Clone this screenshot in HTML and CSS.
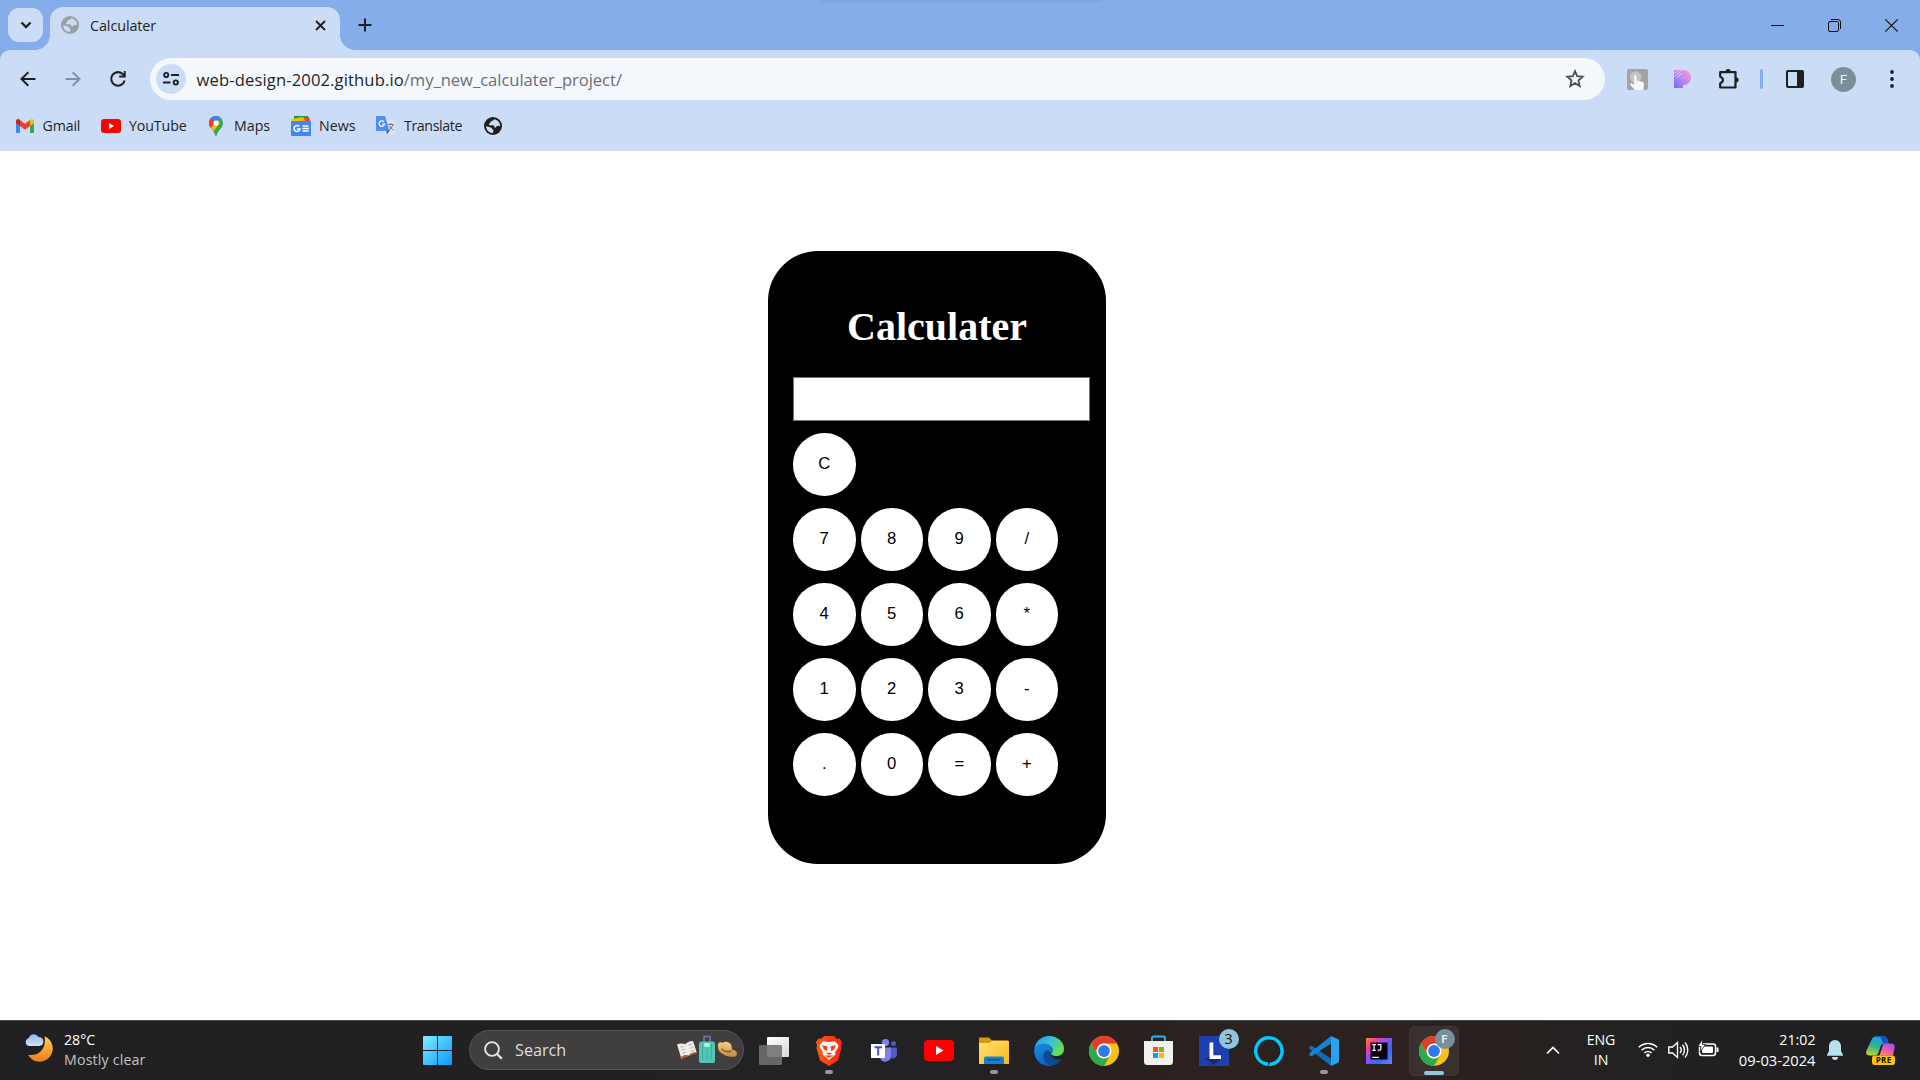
FILE: index.html
```html
<!DOCTYPE html>
<html lang="en">
<head>
<meta charset="utf-8">
<title>Calculater</title>
<link rel="stylesheet" href="styles.css">
</head>
<body>
<div class="browser">
  <header class="tabstrip">
    <button class="tab-search" aria-label="Search tabs"><svg width="12" height="8" viewBox="0 0 12 8"><path d="M1.500 1.500 6 6l4.500-4.500" fill="none" stroke="#1f1f1f" stroke-width="2.300"/></svg></button>
    <div class="tab">
      <svg width="18" height="18" viewBox="0 0 18 18"><circle cx="9" cy="9" r="9" fill="#9a9ea3"/><path d="M10.500 2.200c-1 .5-1.300 1.600-2.800 1.900-1.300.3-1.200 1.900-2.200 2.400C4.800 7 4.700 8 5.500 8.300h3.300c1.500 0 1.700 1.300 1.600 2.300 1.800.3 1.800-1.600 3.400-1.900 1-.1 1.700.3 2.200.6A7 7 0 0 0 10.500 2.200zM2 9.500c.4 3.700 3.300 6.500 6.700 6.500 1 0 .1-1.400.6-2 .8-.8-.3-1.300-1-2-.9-.9-1-1.500-2.300-1.700-1.300-.2-2.300-.8-4-.8z" fill="#cbdcf6"/></svg>
      <span class="tab-title">Calculater</span>
      <svg class="tab-close" width="11" height="11" viewBox="0 0 11 11"><path d="M1 1l9 9M10 1l-9 9" stroke="#1f1f1f" stroke-width="1.900"/></svg>
    </div>
    <svg class="new-tab" width="14" height="14" viewBox="0 0 14 14"><path d="M7 .5v13M.5 7h13" stroke="#1f1f1f" stroke-width="2"/></svg>
    <div class="window-controls">
      <svg width="13" height="13" viewBox="0 0 13 13"><path d="M0 6.500h13" stroke="#111"/></svg>
      <svg width="13" height="13" viewBox="0 0 13 13" fill="none" stroke="#111"><rect x=".5" y="2.500" width="10" height="10" rx="1.500"/><path d="M3 .5h7a2.500 2.500 0 0 1 2.500 2.500v7"/></svg>
      <svg width="13" height="13" viewBox="0 0 13 13"><path d="M.3.300l12.400 12.400M12.700.3.300 12.700" stroke="#111" stroke-width="1.200"/></svg>
    </div>
  </header>

  <div class="chrome">
    <nav class="toolbar">
      <svg class="nav-icon" width="16" height="16" viewBox="0 0 16 16"><path d="M15.500 8H2M8.300 1.200 1.500 8l6.800 6.800" fill="none" stroke="#1f1f1f" stroke-width="2"/></svg>
      <svg class="nav-icon" width="16" height="16" viewBox="0 0 16 16"><path d="M.5 8H14M7.700 1.200 14.500 8l-6.800 6.800" fill="none" stroke="#8590a2" stroke-width="2"/></svg>
      <svg class="reload" width="16" height="16" viewBox="0 0 16 16"><path d="M14.600 9.500A6.800 6.800 0 1 1 13 3.300l1.500 1.600" fill="none" stroke="#1f1f1f" stroke-width="2.100"/><path d="M15.700 0v6.500H9.200V4.600h4.600V0z" fill="#1f1f1f"/></svg>
      <div class="omnibox">
        <span class="site-info"><svg width="16" height="14" viewBox="0 0 16 14" fill="none" stroke="#1f1f1f" stroke-width="1.900"><circle cx="3.200" cy="3" r="2.100"/><path d="M8 3h8M0 10.500h7.500"/><circle cx="12.800" cy="10.500" r="2.100"/></svg></span>
        <span class="url"><span class="host">web-design-2002.github.io</span><span class="path">/my_new_calculater_project/</span></span>
        <svg class="star" width="20" height="20" viewBox="0 0 20 20"><path d="M10 2.200l2.100 5 5.600.5-4.200 3.700 1.200 5.600L10 14l-4.700 3 1.200-5.600L2.300 7.700l5.600-.5z" fill="none" stroke="#4b4e52" stroke-width="1.800"/></svg>
      </div>
      <svg class="ext-touch" width="21" height="21" viewBox="0 0 21 21"><rect width="21" height="21" rx="2" fill="#a3a3a3"/><circle cx="8.500" cy="8" r="5.800" fill="#c3c3c3"/><path d="M7 7.500c0-2 2.600-2 2.600 0v4l5.800 1.300c1.400.4 1.700 1.200 1.600 2.500l-.6 5.700H7.600L3 15.300c.2-1.700 2.300-1.500 4 .4z" fill="#f4f8fd"/></svg>
      <svg class="ext-p" width="18" height="18" viewBox="0 0 18 18"><defs><linearGradient id="pp" x1="0" y1="1" x2="1" y2="0"><stop offset="0" stop-color="#6a6bff"/><stop offset=".55" stop-color="#c88bea"/><stop offset="1" stop-color="#ff9fc0"/></linearGradient></defs><path d="M0 0h9.500C14 0 17 3.500 17 7.500S14 15 9 15v3H0z" fill="url(#pp)"/><path d="M0 4 4 0M0 7.500 7.500 0M3 8 8 3" stroke="#dce4f8" stroke-width=".8"/></svg>
      <svg class="ext-puzzle" width="22" height="22" viewBox="0 0 22 22"><path d="M2.200 4.200h15.300v15.300H2.200v-4.300c3.600-1.200 3.600-5.200 0-6.400z" fill="none" stroke="#1f1f1f" stroke-width="2.200" stroke-linejoin="round"/><path d="M7.500 3.500a2.600 2.600 0 0 1 5.200 0zM18 9.200a2.600 2.600 0 0 1 0 5.200z" fill="#1f1f1f"/></svg>
      <i class="divider"></i>
      <svg class="side-panel" width="18" height="18" viewBox="0 0 18 18"><rect x="1" y="1" width="16" height="16" rx="1" fill="none" stroke="#1f1f1f" stroke-width="2"/><path d="M11 1h6v16h-6z" fill="#1f1f1f"/></svg>
      <span class="avatar">F</span>
      <svg class="menu" width="4" height="18" viewBox="0 0 4 18" fill="#1f1f1f"><circle cx="2" cy="2" r="1.900"/><circle cx="2" cy="9" r="1.900"/><circle cx="2" cy="16" r="1.900"/></svg>
    </nav>
    <nav class="bookmarks">
      <a class="bm bm-gmail"><svg width="18" height="14" viewBox="0 0 18 14"><path d="M0 2v10.700c0 .7.500 1.300 1.200 1.300H4V5z" fill="#4285f4"/><path d="M18 2v10.700c0 .7-.5 1.300-1.200 1.300H14V5z" fill="#34a853"/><path d="M14 1.200V7l4-3V2.200C18 .2 15.800-.7 14.300.6z" fill="#fbbc04"/><path d="M4 7V1l5 3.800L14 1v6l-5 3.800z" fill="#ea4335"/><path d="M0 2.200V4l4 3V1L3.700.6C2.200-.7 0 .2 0 2.200z" fill="#c5221f"/></svg><span>Gmail</span></a>
      <a class="bm bm-youtube"><svg width="20" height="14" viewBox="0 0 20 14"><rect width="20" height="14" rx="3" fill="#f00"/><path d="M8 4v6l5-3z" fill="#fff"/></svg><span>YouTube</span></a>
      <a class="bm bm-maps"><svg width="14" height="20" viewBox="0 0 14 20"><defs><clipPath id="pin"><path d="M7 0a7 7 0 0 0-7 7c0 5 4.500 6 6.200 12.200.2 1 1.400 1 1.600 0C9.500 13 14 12 14 7a7 7 0 0 0-7-7z"/></clipPath></defs><g clip-path="url(#pin)"><path d="M0 0h14v20H0z" fill="#34a853"/><path d="M0 13 12 0H0z" fill="#1a73e8"/><path d="M0 0 7 7l-5 5-2-2z" fill="#ea4335"/><path d="M4 0h10L7 7 3 3z" fill="#4285f4"/><path d="M1 13 9 4l2 3-7 9z" fill="#fbbc04"/></g><circle cx="7" cy="7" r="2.600" fill="#fff"/></svg><span>Maps</span></a>
      <a class="bm bm-news"><svg width="20" height="20" viewBox="0 0 20 20"><path d="M3 0h14v6H3z" fill="#0c9d58"/><path d="M8 2.500 18 1l1.500 5H8z" fill="#ea4335"/><path d="M.5 3 12 1l3 5H.5z" fill="#fbbc04"/><rect y="5" width="20" height="15" rx="1" fill="#4285f4"/><path d="M8.300 10.500A3 3 0 1 0 9 13H6M11.500 10h6M11.500 12.500h6.500M11.500 15h6" fill="none" stroke="#fff" stroke-width="1.500"/></svg><span>News</span></a>
      <a class="bm bm-translate"><svg width="19" height="19" viewBox="0 0 19 19"><rect x="8" y="4.500" width="11" height="14" rx="1" fill="#dfe2e6"/><path d="M11 18.500 10 14h4z" fill="#3a55b5"/><path d="M1 0h8l4.500 15H1a1 1 0 0 1-1-1V1a1 1 0 0 1 1-1z" fill="#4f8df5"/><path d="M8 6a2.700 2.700 0 1 0 .5 2H6" fill="none" stroke="#fff" stroke-width="1.200"/><path d="M12 8.500h6M15 7v1.500M17 8.500c-1 3-2.500 4.500-4 5.500M13.500 10c1 2 2 3 4 4" fill="none" stroke="#66758a"/></svg><span>Translate</span></a>
      <a class="bm bm-globe"><svg width="18" height="18" viewBox="0 0 18 18"><circle cx="9" cy="9" r="9" fill="#1f1f1f"/><path d="M10.500 2.200c-1 .5-1.300 1.600-2.800 1.900-1.300.3-1.200 1.900-2.200 2.400C4.800 7 4.700 8 5.500 8.300h3.300c1.500 0 1.700 1.300 1.600 2.300 1.800.3 1.800-1.600 3.400-1.900 1-.1 1.700.3 2.200.6A7 7 0 0 0 10.500 2.200zM2 9.500c.4 3.700 3.300 6.500 6.700 6.500 1 0 .1-1.400.6-2 .8-.8-.3-1.300-1-2-.9-.9-1-1.500-2.300-1.700-1.300-.2-2.300-.8-4-.8z" fill="#cbdcf6"/></svg></a>
    </nav>
  </div>

  <main class="page">
    <section class="calculator">
      <h1>Calculater</h1>
      <input class="display" type="text" aria-label="Display">
      <div class="keys">
        <button class="key clear">C</button>
        <button class="key">7</button><button class="key">8</button><button class="key">9</button><button class="key">/</button>
        <button class="key">4</button><button class="key">5</button><button class="key">6</button><button class="key">*</button>
        <button class="key">1</button><button class="key">2</button><button class="key">3</button><button class="key">-</button>
        <button class="key">.</button><button class="key">0</button><button class="key">=</button><button class="key">+</button>
      </div>
    </section>
  </main>
</div>

<footer class="taskbar">
  <div class="weather">
    <svg width="29" height="29" viewBox="0 0 29 29"><defs><linearGradient id="moon" x1="0" y1="0" x2="0" y2="1"><stop offset="0" stop-color="#ffd04a"/><stop offset="1" stop-color="#f07c1c"/></linearGradient><linearGradient id="cloud" x1="0" y1="0" x2="0" y2="1"><stop offset="0" stop-color="#8db4ee"/><stop offset="1" stop-color="#d5e3fb"/></linearGradient></defs><path d="M19.500 2.200A13.200 13.200 0 1 1 3 20.800c5 .8 9.500-.3 12.500-3.300 4-4 5.200-9.500 4-15.300z" fill="url(#moon)"/><path d="M4 12a4 4 0 0 1-.3-7.800A5.300 5.300 0 0 1 13.500 3a4.500 4.500 0 0 1 .8 9z" fill="url(#cloud)"/></svg>
    <div class="lines"><span class="bright">28°C</span><span class="cond">Mostly clear</span></div>
  </div>
  <svg width="29" height="29" viewBox="0 0 29 29"><defs><linearGradient id="win" x1="0" y1="0" x2="1" y2="1"><stop offset="0" stop-color="#7ff0ff"/><stop offset="1" stop-color="#0a96ff"/></linearGradient></defs><path d="M0 1a1 1 0 0 1 1-1h13v14H0zM15 0h13a1 1 0 0 1 1 1v13H15zM0 15h14v14H1a1 1 0 0 1-1-1zM15 15h14v13a1 1 0 0 1-1 1H15z" fill="url(#win)"/></svg>
  <div class="search">
    <svg width="19" height="19" viewBox="0 0 19 19"><circle cx="8" cy="8" r="6.900" fill="none" stroke="#e6e6e6" stroke-width="1.900"/><path d="M12.800 12.800l5 5" stroke="#e6e6e6" stroke-width="2.300"/></svg>
    <span class="search-label">Search</span>
    <svg class="search-art" width="61" height="30" viewBox="0 0 61 30"><defs><linearGradient id="hat" x1="0" y1="0" x2="0" y2="1"><stop offset="0" stop-color="#f4cf86"/><stop offset="1" stop-color="#c58a3c"/></linearGradient></defs><path d="M1 10l7-1.500 8-2.500 4 12-8 3-8 3.500z" fill="#a9643c"/><path d="M0 9.500c3-1.500 6-1.300 8.500 0l3 11c-2.500-1-5-.5-7.500 1.500zM8.500 9.500C10 7 12.500 6 16 6l3.500 11c-3.500 0-6 1-8 3.500z" fill="#efeee9"/><path d="M3 12l4-.5M4 15l4-.5M5 18l4-.5M11.500 10.500l4-1.500M12.500 13.500l4-1.500M13.500 16.500l4-1.500" stroke="#aaa" stroke-width=".8"/><path d="M27 7V1.500h6V7" fill="none" stroke="#6a78a8" stroke-width="1.600"/><rect x="22" y="6.500" width="16" height="21.500" rx="2" fill="#53c5b5"/><path d="M25.500 9v16M30 13v12M34.500 9v16" stroke="#3fae9f" stroke-width="1"/><rect x="27" y="8" width="6" height="4" rx="1" fill="#a6efe4"/><path d="M41 12c-1-4 2-6 5-4 1-2 7-2 8.500 2.500l.8 4.500c3 0 5.500 2 4.500 5-2 4-14 1-17.500-4-1-1.500-1.500-2.700-1.300-4z" fill="url(#hat)"/><path d="M44.500 13.500c2 3 6.500 4 10 2.300" fill="none" stroke="#7d5226" stroke-width="1.300"/></svg>
  </div>
  <div class="apps">
    <div class="app"><svg width="30" height="28" viewBox="0 0 30 28"><defs><linearGradient id="tv" x1="0" y1="0" x2="1" y2="1"><stop offset="0" stop-color="#fff"/><stop offset="1" stop-color="#d8d8d8"/></linearGradient></defs><rect x="8" width="22" height="20" rx="1" fill="url(#tv)"/><rect y="8" width="23" height="20" rx="1" fill="#6f6f6f" opacity=".88"/></svg></div>
    <div class="app running"><svg width="26" height="30" viewBox="0 0 26 30"><defs><linearGradient id="brave"><stop offset="0" stop-color="#ff5a14"/><stop offset="1" stop-color="#f92a12"/></linearGradient></defs><path d="M8 0h10l2.500 2.800 3-.3L26 6l-1 3.500.5 2.500-3.500 12.500L13 30l-9-5.500L.5 12 1 9.500 0 6l2.500-3.500 3 .3z" fill="url(#brave)"/><path d="M3.500 9.500 7 5.300l4 .7h4l4-.7 3.500 4.200-.7 2.500-2.800 4.200.5 2.300-4.500 3.500-2 2.300-2-2.300-4.500-3.500.5-2.300L4.200 12z" fill="#fff"/><path d="M6.500 9.500l4.700 1-.7 4.500-2.700-2.300zM19.500 9.500l-4.700 1 .7 4.500 2.700-2.300zM10.500 17h5L13 19zM8.800 19.500l4.200 2 4.200-2" fill="#fb3c12" stroke="#fb3c12" stroke-width=".5"/></svg></div>
    <div class="app"><svg width="26" height="23" viewBox="0 0 26 23"><circle cx="22.500" cy="4.600" r="2.500" fill="#5059c9"/><path d="M18 8.500h8V15a4.200 4.200 0 0 1-8 2z" fill="#5059c9"/><circle cx="14.500" cy="3.600" r="3.700" fill="#7b83eb"/><path d="M9 8.500h11V17a5.700 5.700 0 0 1-11 2z" fill="#7b83eb"/><path d="M0 5h14v14H0z" fill="#fff"/><path d="M3.500 8.300h7.500M7.200 8.300v8.200" stroke="#4b53bc" stroke-width="2"/></svg></div>
    <div class="app"><svg width="30" height="21" viewBox="0 0 30 21"><rect width="30" height="21" rx="4" fill="#f00"/><path d="M12 6v9l7.500-4.500z" fill="#fff"/></svg></div>
    <div class="app running"><svg width="30" height="28" viewBox="0 0 30 28"><defs><linearGradient id="fold" x1="0" y1="0" x2="1" y2="1"><stop offset="0" stop-color="#ffe07a"/><stop offset="1" stop-color="#fdb913"/></linearGradient></defs><path d="M0 1.500A1 1 0 0 1 1 .5h9l3 3h15a1.500 1.500 0 0 1 1.500 1.500v5H0z" fill="#d9990a"/><path d="M0 6h10.500L13 3.800h16a1 1 0 0 1 1 1V27H0z" fill="url(#fold)"/><path d="M5 27v-5.500a2 2 0 0 1 2-2h16a2 2 0 0 1 2 2V27z" fill="#1480d0"/><path d="M8.500 22.800h13" stroke="#0b4c86" stroke-width="1.200"/></svg></div>
    <div class="app"><svg width="30" height="30" viewBox="0 0 30 30"><defs><linearGradient id="e1" x1="0" y1="0" x2="1" y2=".6"><stop offset="0" stop-color="#1b9de2"/><stop offset=".5" stop-color="#35c1d8"/><stop offset="1" stop-color="#6be04a"/></linearGradient><linearGradient id="e2" x1="0" y1="0" x2=".6" y2="1"><stop offset="0" stop-color="#1a8fdb"/><stop offset="1" stop-color="#0a63c0"/></linearGradient></defs><circle cx="15" cy="15" r="15" fill="#0d4a94"/><path d="M1 10.500C8 5 19 8 19.500 14c0 2.500-2.500 2.500-2.300 4.500 0-4-5-6-7.200-1.500C8 22 11 29 18 29.700A15 15 0 0 1 1 10.500z" fill="url(#e2)"/><path d="M.7 11.500C2 5 8 0 15 0c8.500 0 15 6 15 12.500 0 5-3.500 7.500-7.500 7.500-3.500 0-6-1.300-5-2.500 3-3 1.500-8.500-5.500-9.500C7 7.300 3 8.500.7 11.500z" fill="url(#e1)"/><path d="M17.300 18c.5 2 4 2.700 7 2.200 2-.3 4-1.600 5.700-3.700v5l-2 1c-4 2.500-11 .5-10.700-4.500z" fill="#202022"/></svg></div>
    <div class="app"><svg width="30" height="30" viewBox="0 0 30 30"><circle cx="15" cy="15" r="15" fill="#fbc116"/><path d="M2 7.500A15 15 0 0 1 28 7.500H15a7.500 7.500 0 0 0-6.500 11.200z" fill="#e33b2e"/><path d="M2 7.500A15 15 0 0 0 15 30l6.500-11.300a7.500 7.500 0 0 1-13 0z" fill="#2da94f"/><circle cx="15" cy="15" r="7.500" fill="#fff"/><circle cx="15" cy="15" r="5.900" fill="#3079ea"/></svg></div>
    <div class="app"><svg class="store" width="29" height="29" viewBox="0 0 29 29"><path d="M8 5V2a1.500 1.500 0 0 1 1.500-1.500h10A1.500 1.500 0 0 1 21 2v3" fill="none" stroke="#2bb4ea" stroke-width="1.900"/><path d="M0 5h29v20.500a3.500 3.500 0 0 1-3.500 3.500h-22A3.500 3.500 0 0 1 0 25.500z" fill="#f1f1f1"/><path d="M9 11h5v5H9z" fill="#f25022"/><path d="M15 11h5v5h-5z" fill="#7fba00"/><path d="M9 17h5v5H9z" fill="#00a4ef"/><path d="M15 17h5v5h-5z" fill="#ffb900"/></svg></div>
    <div class="app"><svg width="30" height="30" viewBox="0 0 30 30"><path d="M0 0h30v30H0z" fill="#1e3fae"/><path d="M7 23 12 19l10 1v3l-7 6z" fill="#152b6b"/><path d="M10.500 6.500h3.800v12.700H22V23H10.500z" fill="#fff"/></svg><span class="count">3</span></div>
    <div class="app"><svg width="30" height="30" viewBox="0 0 30 30"><path d="M12 27.900A13.200 13.200 0 1 1 15.500 28.200" fill="none" stroke="#00caff" stroke-width="3.400"/><path d="M12.500 25.500c1.300.5 2 1.700 2 4.500a15 15 0 0 1-4-.7z" fill="#00caff"/><path d="M14.800 30c5 0 11-4 13-11-3 5.500-7.500 8-12 8.500z" fill="#00caff"/></svg></div>
    <div class="app running"><svg width="30" height="30" viewBox="0 0 30 30"><path d="M.3 10.800 2.700 9.800 22 22.500V30L.3 12.800z" fill="#0a6fb8"/><path d="M.3 19.200 2.700 20.200 22 7.500V0L.3 17.200z" fill="#1484cf"/><path d="M22 0l7 3.300a1.500 1.500 0 0 1 1 1.400v20.600a1.500 1.500 0 0 1-1 1.400L22 30z" fill="#2aa3ee"/></svg></div>
    <div class="app"><svg width="26" height="26" viewBox="0 0 26 26"><defs><linearGradient id="ij" x1="0" y1="0" x2="1" y2="1"><stop offset="0" stop-color="#ff8a1e"/><stop offset=".2" stop-color="#ff3d8a"/><stop offset=".4" stop-color="#9a4ff0"/><stop offset=".7" stop-color="#2b6df6"/><stop offset="1" stop-color="#7b7cf8"/></linearGradient></defs><path d="M0 0h26v26H0z" fill="url(#ij)"/><path d="M4.500 4.500h17v17h-17z" fill="#0a0010"/><path d="M6.300 6.700h3.600M8.100 6.700v5.500M6.300 12.300h3.600M11.500 6.700h3.400v4c0 1.400-1.700 2-3.200 1.200M6.300 19.300h6.500" fill="none" stroke="#fff" stroke-width="1.200"/></svg></div>
    <div class="app active"><div class="tile"><svg width="30" height="30" viewBox="0 0 30 30"><circle cx="15" cy="15" r="15" fill="#fbc116"/><path d="M2 7.500A15 15 0 0 1 28 7.500H15a7.500 7.500 0 0 0-6.500 11.200z" fill="#e33b2e"/><path d="M2 7.500A15 15 0 0 0 15 30l6.500-11.300a7.500 7.500 0 0 1-13 0z" fill="#2da94f"/><circle cx="15" cy="15" r="7.500" fill="#fff"/><circle cx="15" cy="15" r="5.900" fill="#3079ea"/></svg></div><span class="profile">F</span></div>
  </div>
  <div class="tray">
    <svg class="up" width="14" height="9" viewBox="0 0 14 9"><path d="M1 7.500 7 1.500l6 6" fill="none" stroke="#fff" stroke-width="1.700"/></svg>
    <div class="lines lang"><span>ENG</span><span>IN</span></div>
    <svg class="wifi" width="20" height="16" viewBox="0 0 20 16" fill="none" stroke="#fff" stroke-width="1.500"><path d="M.8 6.300a13 13 0 0 1 18.400 0M3.600 9.200a9 9 0 0 1 12.800 0M6.300 12a5.200 5.200 0 0 1 7.400 0"/><circle cx="10" cy="14.200" r="1.700" fill="#fff" stroke="none"/></svg>
    <svg class="vol" width="21" height="18" viewBox="0 0 21 18" fill="none" stroke="#fff" stroke-width="1.400"><path d="M.8 6h3.700L9.500 1.500v15L4.500 12H.8z"/><path d="M12 6a4.500 4.500 0 0 1 0 6M14.500 3.700a8 8 0 0 1 0 10.600M17 1.500a11.500 11.500 0 0 1 0 15"/></svg>
    <svg class="bat" width="21" height="17" viewBox="0 0 21 17"><rect x="1.500" y="4" width="16" height="11.500" rx="2.500" fill="none" stroke="#fff" stroke-width="1.500"/><rect x="4" y="6.500" width="11" height="6.500" rx="1" fill="#fff"/><path d="M18.500 7.500h2v4.500h-2z" fill="#fff"/><path d="M4.500-1 0 6.500h3L2 12l5.500-7.500h-3z" fill="#fff" stroke="#222" stroke-width=".8"/></svg>
    <div class="lines clock"><span>21:02</span><span class="date">09-03-2024</span></div>
    <svg class="bell" width="16" height="20" viewBox="0 0 16 20" fill="#b5e3ee"><path d="M8 0a6 6 0 0 1 6 6v5l2 4v.8H0V15l2-4V6a6 6 0 0 1 6-6zM5 17h6a3 3 0 0 1-6 0z"/></svg>
    <svg class="copilot" width="30" height="29" viewBox="0 0 30 29"><defs><linearGradient id="ca" x1=".6" y1="0" x2=".2" y2="1"><stop offset="0" stop-color="#1a9cf0"/><stop offset=".5" stop-color="#28b39a"/><stop offset="1" stop-color="#c6d52b"/></linearGradient><linearGradient id="cb" x1=".8" y1="0" x2=".2" y2="1"><stop offset="0" stop-color="#a34df0"/><stop offset=".6" stop-color="#ef5fa2"/><stop offset="1" stop-color="#ff9060"/></linearGradient></defs><path d="M5.500 4Q6.500.5 10 .5h8q2.500 0 3.500 3l1 4h-5q-2 0-3 3l-2 6q-1 3-4 3H4q-5 0-3.500-5z" fill="url(#ca)"/><path d="M14 .5h4q2.500 0 3.500 3l1 4h-5z" fill="#1c4fd0"/><path d="M17.500 7.500H25q4.500 0 3.500 5l-1.500 7H13.500z" fill="url(#cb)"/><rect x="6" y="19.500" width="23" height="9.500" rx="2.500" fill="#ffc20a"/><text x="17.700" y="27.200" text-anchor="middle" class="pre">PRE</text></svg>
  </div>
</footer>
</body>
</html>
```
FILE: styles.css
```css
* { box-sizing: border-box; }
body { margin: 0; background: #fff; font-family: "Open Sans", "Noto Sans", sans-serif; font-size: 14.2px; color: #1f1f1f; overflow: hidden; }
svg { display: block; flex: none; overflow: visible; }
button { border: 0; padding: 0; }
span { white-space: nowrap; }

/* Browser window */
.browser { display: flex; flex-direction: column; height: 1020px; background: #85ade9; }
.tabstrip { display: flex; align-items: center; height: 50px; padding-left: 8px; background: linear-gradient(#7da4df, #85ade9) 820px 0 / 282px 4px no-repeat; }
.tab-search { display: flex; align-items: center; justify-content: center; width: 35px; height: 34px; border-radius: 11px; background: #cbdcf6; }
.tab { position: relative; display: flex; align-items: center; align-self: flex-end; width: 290px; height: 43px; margin-left: 7px; padding: 0 14.5px 7px 11px; border-radius: 13px 13px 0 0; background: #cbdcf6; }
.tab::before, .tab::after { content: ""; position: absolute; bottom: 0; width: 15px; height: 15px; }
.tab::before { left: -15px; background: radial-gradient(circle at 0 0, transparent 14.5px, #cbdcf6 15.2px); }
.tab::after { right: -15px; background: radial-gradient(circle at 100% 0, transparent 14.5px, #cbdcf6 15.2px); }
.tab-title { margin-left: 11px; font-size: 14.4px; letter-spacing: -.1px; }
.tab-close { margin-left: auto; }
.new-tab { margin-left: 18px; }
.window-controls { display: flex; gap: 44px; margin-left: auto; padding-right: 22.5px; }

.chrome { height: 101px; border-radius: 10px 10px 0 0; background: #cbdcf6; }
.toolbar { display: flex; align-items: center; height: 50px; padding: 8px 0 0 19.5px; }
.nav-icon { margin-right: 29.3px; }
.omnibox { display: flex; flex: none; align-items: center; width: 1455px; height: 42px; margin-left: 24px; padding: 0 20px 0 6px; border-radius: 21px; background: #f4f8fd; }
.site-info { display: flex; align-items: center; justify-content: center; width: 30px; height: 30px; border-radius: 50%; background: #cbdcf6; }
.url { margin-left: 10.5px; font-size: 16.6px; }
.host { letter-spacing: .12px; }
.path { color: #6b6e72; letter-spacing: -.04px; }
.star { margin-left: auto; }
.ext-touch { margin-left: 22px; }
.ext-p { margin-left: 26px; }
.ext-puzzle { margin-left: 25.5px; }
.divider { width: 3px; height: 20px; margin-left: 20.5px; border-radius: 2px; background: #85ade9; }
.side-panel { margin-left: 23px; }
.avatar { display: flex; align-items: center; justify-content: center; width: 25px; height: 25px; margin-left: 27px; border-radius: 50%; background: #78909c; color: #eef2f4; font: 13.5px Roboto, sans-serif; }
.menu { margin-left: 34px; }

.bookmarks { display: flex; align-items: center; height: 51px; padding-left: 16px; }
.bm { display: flex; align-items: center; flex: none; }
.bm-gmail { width: 85px; gap: 8.5px; letter-spacing: -.15px; }
.bm-youtube { width: 108px; gap: 8px; letter-spacing: -.1px; }
.bm-maps { width: 82px; gap: 11px; }
.bm-news { width: 85px; gap: 8px; }
.bm-translate { width: 108px; gap: 9px; letter-spacing: -.38px; }

/* Page */
.page { flex: 1; padding-left: 768px; padding-top: 100px; background: #fff; }
.calculator { width: 338px; height: 613px; padding: 53px 0 0 25px; border-radius: 50px; background: #000; }
.calculator h1 { margin: 0 25px 27px 0; font: bold 40px/46px "Liberation Serif", "Times New Roman", serif; text-align: center; color: #fff; }
.display { display: block; width: 297px; height: 44px; padding: 0; border: 1px solid #767676; background: #fff; }
.keys { display: grid; grid-template-columns: repeat(4, 62.5px); grid-auto-rows: 62.5px; gap: 12.5px 5px; margin-top: 12px; }
.key { border-radius: 50%; background: #fff; color: #000; font: 16.67px "Liberation Sans", Arial, sans-serif; }
.clear, .clear + .key { grid-column: 1; }

/* Taskbar */
.taskbar { display: flex; align-items: center; height: 60px; border-top: 1px solid #4b4b4d; background: linear-gradient(90deg, #202022 0, #222124 900px, #2b211e 1180px, #2c211e 1400px, #242122 1620px, #202022 1750px); color: #fff; }
.weather { display: flex; align-items: center; width: 423px; padding-left: 25px; }
.weather svg { margin-top: -4px; }
.weather .lines { margin-left: 10px; }
.lines { display: flex; flex-direction: column; margin-top: -2px; line-height: 20px; }
.cond { color: #c4c4c4; letter-spacing: .17px; }
.search { display: flex; align-items: center; width: 275px; height: 40px; margin-left: 17px; margin-top: -1px; padding: 0 5px 0 14px; border: 1px solid #575456; border-radius: 20px; background: #413e40; }
.search-label { margin-left: 12px; font-size: 16.2px; color: #dedede; }
.search-art { margin-left: auto; }
.apps { display: flex; height: 59px; margin-left: 2.5px; }
.app { position: relative; display: flex; align-items: center; justify-content: center; width: 55px; }
.store { margin-right: 1px; }
.running::after { content: ""; position: absolute; bottom: 6px; left: 23.5px; width: 8px; height: 4px; border-radius: 2px; background: #979797; }
.count { position: absolute; top: 8px; right: 3px; width: 20px; height: 20px; border-radius: 50%; background: #90c5dd; color: #111; text-align: center; line-height: 20px; }
.tile { display: flex; align-items: center; justify-content: center; width: 50px; height: 50px; border: 1px solid #3f3735; border-radius: 5px; background: #393130; }
.active::after { content: ""; position: absolute; bottom: 5px; left: 17.5px; width: 20px; height: 4px; border-radius: 2px; background: #94c6de; }
.profile { position: absolute; top: 8px; right: 7px; width: 20px; height: 20px; border-radius: 50%; background: #78909c; color: #e3e9ec; text-align: center; font: bold 11.5px/20px Roboto, sans-serif; }
.tray { display: flex; align-items: center; margin-left: 84.5px; }
.lang { align-items: center; width: 29px; margin: -1px 0 0 26.5px; letter-spacing: -.1px; }
.wifi { margin-left: 22.5px; margin-top: -4px; }
.vol { margin-left: 9.5px; margin-top: -1px; }
.bat { margin-left: 9px; margin-top: -4px; }
.clock { align-items: flex-end; width: 97px; }
.date { font-size: 14.7px; }
.bell { margin-left: 11.5px; margin-top: -1px; }
.copilot { margin-left: 22.5px; }
.pre { font: bold 8px "Open Sans", sans-serif; fill: #111; letter-spacing: .4px; }
```
